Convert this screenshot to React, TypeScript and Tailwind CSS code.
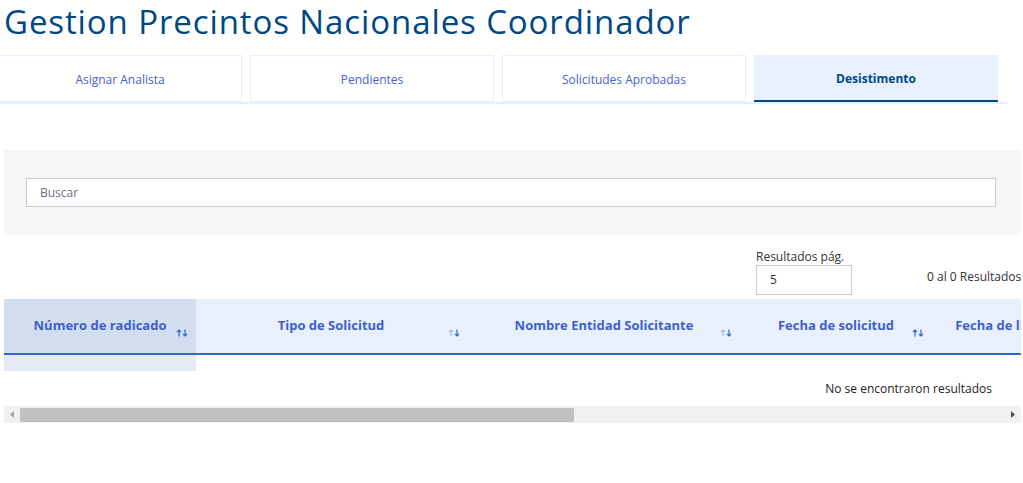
import React from "react";

const tabs = [
  { label: "Asignar Analista", active: false },
  { label: "Pendientes", active: false },
  { label: "Solicitudes Aprobadas", active: false },
  { label: "Desistimento", active: true },
];

const columns = [
  { label: "Número de radicado", w: "w-[192px]", sorted: true, iconRight: "right-[8px]" },
  { label: "Tipo de Solicitud", w: "w-[270px]", sorted: false, iconRight: "right-[6px]" },
  { label: "Nombre Entidad Solicitante", w: "w-[276px]", sorted: false, iconRight: "right-[10px]" },
  { label: "Fecha de solicitud", w: "w-[188px]", sorted: true, iconRight: "right-[6px]" },
  { label: "Fecha de limite de respuesta", w: "w-[236px]", sorted: false, iconRight: "right-[6px]" },
  { label: "Estado", w: "w-[246px]", sorted: false, iconRight: "right-[8px]" },
  { label: "Analista asignado", w: "w-[230px]", sorted: false, iconRight: "right-[8px]" },
  { label: "Acciones", w: "w-[166px]", sorted: false, iconRight: "right-[8px]" },
];

const SortIcon = ({ dark }: { dark: boolean }) => (
  <svg width="12" height="8" viewBox="0 0 12 8" fill="none">
    <path d="M3 7.5V1M1 3l2-2 2 2" stroke={dark ? "#3366cc" : "#a9c0ec"} strokeWidth="1.2" />
    <path d="M9 0.5V7M7 5l2 2 2-2" stroke="#3366cc" strokeWidth="1.2" />
  </svg>
);

const App = () => {
  return (
    <div className="w-[1023px] h-[483px] overflow-hidden bg-white pl-[4px] [font-family:'Open_Sans',sans-serif]">
      <h1 className="text-[33px] leading-[42px] text-[#004884] pt-[1px] tracking-[0.9px]">
        Gestion Precintos Nacionales Coordinador
      </h1>

      <div className="mt-[12px] ml-[-6px] w-[1009px] flex gap-[8px] border-b-[2px] border-[#e8f0fe]">
        {tabs.map((t) => (
          <div
            key={t.label}
            className={
              t.active
                ? "w-[244px] h-[47px] pt-[3px] flex items-center justify-center bg-[#e8f0fe] border-b-[2px] border-[#004884] text-[#004884] font-bold text-[12px]"
                : "w-[244px] h-[47px] pt-[2px] flex items-center justify-center border border-[#e6effd] text-[#4a61d6] text-[12px]"
            }
          >
            {t.label}
          </div>
        ))}
      </div>

      <div className="mt-[46px] w-[1017px] h-[85px] bg-[#f5f6f8] pl-[22px] pr-[25px] pt-[28px]">
        <div className="h-[29px] bg-white border border-[#cccccc] flex items-center px-[13px] text-[12px] text-[#6b7280]">
          Buscar
        </div>
      </div>

      <div className="flex items-end w-[1017px] mt-[14px]">
        <div className="ml-[752px] flex flex-col">
          <span className="text-[12px] leading-[16px] text-[#333333]">Resultados pág.</span>
          <div className="w-[96px] h-[30px] border border-[#cccccc] flex items-center px-[13px] text-[12px] text-[#333333]">
            5
          </div>
        </div>
        <span className="ml-[75px] mb-[9px] text-[12px] text-[#333333] whitespace-nowrap">
          0 al 0 Resultados
        </span>
      </div>

      <div className="mt-[4px] w-[1017px] overflow-hidden">
        <div className="w-[1806px]">
          <div className="flex h-[56px] bg-[#e8f0fe] border-b-[2px] border-[#3366cc]">
            {columns.map((c, i) => (
              <div
                key={c.label}
                className={`${c.w} relative flex items-center justify-center shrink-0 ${i === 0 ? "bg-[#d1def0]" : ""}`}
              >
                <span className="text-[13px] font-bold text-[#3f5fc8] whitespace-nowrap mb-[1px]">
                  {c.label}
                </span>
                <span className={`absolute top-[30px] ${c.iconRight}`}>
                  <SortIcon dark={c.sorted} />
                </span>
              </div>
            ))}
          </div>
          <div className="w-[192px] h-[16px] bg-[#e5ebf3]" />
          <div className="w-[1017px] h-[35px] flex items-center justify-end pr-[29px] text-[12px] text-[#222222]">
            No se encontraron resultados
          </div>
        </div>
      </div>

      <div className="w-[1017px] h-[17px] bg-[#f1f1f1] flex items-center">
        <div className="w-[16px] flex justify-center">
          <svg width="4" height="7" viewBox="0 0 4 7">
            <path d="M4 0L0 3.5L4 7Z" fill="#a3a3a3" />
          </svg>
        </div>
        <div className="w-[554px] h-[14px] bg-[#c1c1c1]" />
        <div className="flex-1" />
        <div className="w-[16px] flex justify-center">
          <svg width="4" height="7" viewBox="0 0 4 7">
            <path d="M0 0L4 3.5L0 7Z" fill="#505050" />
          </svg>
        </div>
      </div>
    </div>
  );
};

export default App;
